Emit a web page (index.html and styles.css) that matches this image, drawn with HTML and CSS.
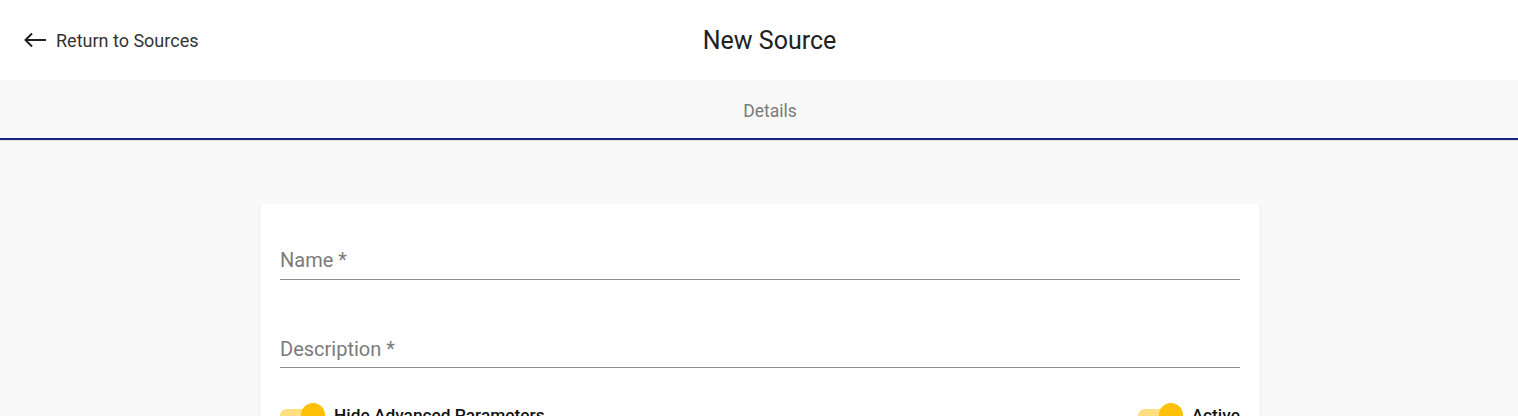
FILE: index.html
```html
<!DOCTYPE html>
<html lang="en">
<head>
<meta charset="utf-8">
<title>New Source</title>
<link rel="stylesheet" href="styles.css">
</head>
<body>
<header class="topbar">
  <a class="back" href="#">
    <svg class="back-icon" width="24" height="16" viewBox="0 0 24 16" aria-hidden="true">
      <path d="M23 8H2.5M9 1.5L2.5 8L9 14.5" fill="none" stroke="#212121" stroke-width="2"/>
    </svg>
    <span>Return to Sources</span>
  </a>
  <h1 class="title">New Source</h1>
  <div class="spacer"></div>
</header>
<nav class="tabs">
  <div class="tab">Details</div>
</nav>
<main class="content">
  <section class="card">
    <div class="field"><span class="label">Name *</span></div>
    <div class="field field-next"><span class="label">Description *</span></div>
    <div class="toggles">
      <label class="toggle-item">
        <span class="toggle"><span class="track"></span><span class="thumb"></span></span>
        <span class="toggle-text">Hide Advanced Parameters</span>
      </label>
      <label class="toggle-item">
        <span class="toggle"><span class="track"></span><span class="thumb"></span></span>
        <span class="toggle-text">Active</span>
      </label>
    </div>
  </section>
</main>
</body>
</html>
```
FILE: styles.css
```css
* { box-sizing: border-box; }
html, body { margin: 0; padding: 0; }
body {
  font-family: Roboto, "Noto Sans", "Liberation Sans", sans-serif;
  background: #f9f9f9;
  color: #212121;
  overflow: hidden;
}
.topbar {
  height: 80px;
  background: #fff;
  display: grid;
  grid-template-columns: 1fr auto 1fr;
  align-items: center;
  padding: 0 24px 0 23px;
}
.back {
  display: flex;
  align-items: center;
  gap: 9px;
  text-decoration: none;
  color: #333;
  font-size: 18px;
  justify-self: start;
}
.back-icon { display: block; }
.title {
  margin: 0;
  font-size: 25px;
  font-weight: 400;
  color: #212121;
  padding-left: 22px;
}
.tabs {
  height: 60px;
  background: #f9f9f9;
  border-bottom: 2px solid #1a237e;
  box-shadow: 0 1px 0 #e4e4e4;
  display: flex;
  justify-content: center;
  align-items: center;
  padding-left: 22px;
  padding-top: 3px;
}
.tab {
  font-size: 17.5px;
  color: #7a7a7a;
}
.content {
  padding-top: 64px;
  padding-left: 2px;
}
.card {
  width: 1000px;
  margin: 0 auto;
  background: #fff;
  border-radius: 5px;
  box-shadow: 0 1px 3px rgba(0,0,0,0.12);
  padding: 0 20px 40px;
}
.field {
  height: 76px;
  border-bottom: 1px solid #8c8c8c;
  display: flex;
  align-items: flex-end;
  padding-bottom: 7px;
}
.field-next {
  margin-top: 12px;
  padding-bottom: 6px;
}
.label {
  font-size: 20px;
  line-height: 24px;
  color: #7b7b7b;
}
.toggles {
  margin-top: 35px;
  display: flex;
  justify-content: space-between;
  align-items: center;
}
.toggle-item {
  display: flex;
  align-items: center;
  gap: 9px;
}
.toggle {
  position: relative;
  width: 45px;
  height: 24px;
  display: block;
}
.track {
  position: absolute;
  left: 0;
  top: 6px;
  width: 40px;
  height: 13px;
  border-radius: 7px;
  background: #ffdf80;
}
.thumb {
  position: absolute;
  left: 21px;
  top: 0;
  width: 24px;
  height: 24px;
  border-radius: 50%;
  background: #ffc107;
}
.toggle-text {
  font-size: 17.3px;
  font-weight: 500;
  color: #111;
}
```
